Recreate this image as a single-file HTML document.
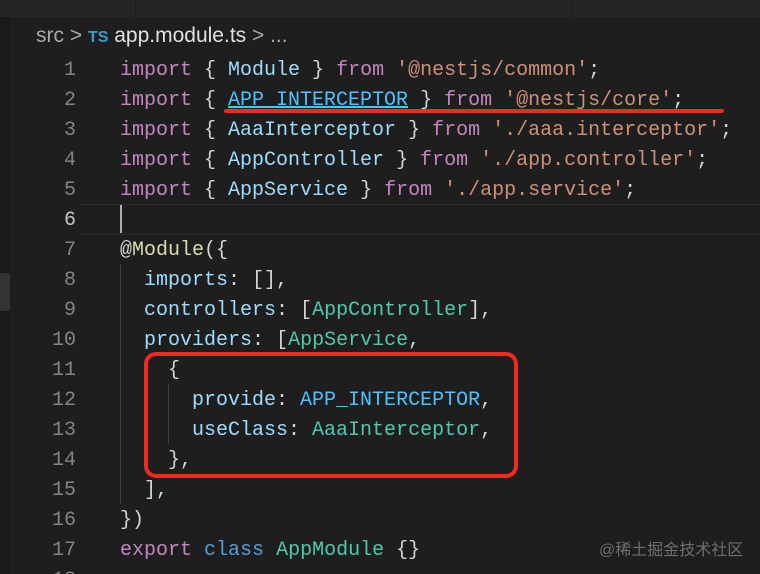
<!DOCTYPE html>
<html style="overflow:hidden;height:574px"><head><meta charset="utf-8"><style>
body{margin:0;width:760px;height:574px;background:#1e1e1e;overflow:hidden;position:relative;font-family:"Liberation Mono",monospace}
.top{position:absolute;left:0;top:0;width:760px;height:17px;background:#252526}
.sep{position:absolute;top:0;width:1px;height:17px;background:#1a1a1a}
.strip{position:absolute;left:0;top:17px;width:10px;height:557px;background:#1a1a1a}
.crumb{position:absolute;left:36px;top:24px;font-family:"Liberation Sans",sans-serif;font-size:21px;color:#a9a9a9}
.crumb .ts{color:#3a9cc9;font-weight:bold;font-size:16px}
.crumb .f{color:#e0e0e0}
.ln{position:absolute;left:30px;width:46px;text-align:right;font-size:20px;color:#858585;line-height:30px}
.code{position:absolute;left:120px;font-size:20px;line-height:30px;white-space:pre;color:#d4d4d4}
.k{color:#c586c0}.v{color:#9cdcfe}.s{color:#ce9178}.c{color:#4fc1ff}.t{color:#4ec9b0}.d{color:#dcdcaa}.b{color:#569cd6}
.g{position:absolute;width:1px;background:#404040}
</style></head><body>
<div class="top"></div><div class="sep" style="left:135px"></div><div class="sep" style="left:572px"></div>
<div class="strip"></div>
<div style="position:absolute;left:0;top:273px;width:10px;height:38px;background:#333"></div>
<div class="crumb">src &gt; <span class="ts">TS</span> <span class="f">app.module.ts</span> &gt; ...</div>
<div style="position:absolute;left:80px;top:204px;width:680px;height:29px;border-top:1px solid #2a2a2a;border-bottom:1px solid #2a2a2a"></div>
<div class="ln" style="top:56px">1<br>2<br>3<br>4<br>5<br><span style="color:#c6c6c6">6</span><br>7<br>8<br>9<br>10<br>11<br>12<br>13<br>14<br>15<br>16<br>17<br>18</div>
<div class="g" style="left:120px;top:264px;height:240px"></div>
<div class="g" style="left:168px;top:384px;height:60px"></div>
<div style="position:absolute;left:120px;top:205px;width:2px;height:28px;background:#aeafad"></div>
<div class="code" style="top:56px"><span class="k">import</span> { <span class="v">Module</span> } <span class="k">from</span> <span class="s">'@nestjs/common'</span>;
<span class="k">import</span> { <span class="c" style="text-decoration:underline">APP_INTERCEPTOR</span> } <span class="k">from</span> <span class="s">'@nestjs/core'</span>;
<span class="k">import</span> { <span class="v">AaaInterceptor</span> } <span class="k">from</span> <span class="s">'./aaa.interceptor'</span>;
<span class="k">import</span> { <span class="v">AppController</span> } <span class="k">from</span> <span class="s">'./app.controller'</span>;
<span class="k">import</span> { <span class="v">AppService</span> } <span class="k">from</span> <span class="s">'./app.service'</span>;

@<span class="d">Module</span>({
  <span class="v">imports</span>: [],
  <span class="v">controllers</span>: [<span class="t">AppController</span>],
  <span class="v">providers</span>: [<span class="t">AppService</span>,
    {
      <span class="v">provide</span>: <span class="c">APP_INTERCEPTOR</span>,
      <span class="v">useClass</span>: <span class="t">AaaInterceptor</span>,
    },
  ],
})
<span class="k">export</span> <span class="b">class</span> <span class="t">AppModule</span> {}</div>
<div style="position:absolute;left:224px;top:109px;width:500px;height:4px;background:#f02a1c;border-radius:2px"></div>
<div style="position:absolute;left:144px;top:352px;width:366px;height:118px;border:4px solid #f02a1c;border-radius:12px"></div>
<div style="position:absolute;left:599px;top:536px;font-family:'Liberation Sans','Noto Sans CJK SC',sans-serif;font-size:16px;color:#6e6e6e">@稀土掘金技术社区</div>
</body></html>
